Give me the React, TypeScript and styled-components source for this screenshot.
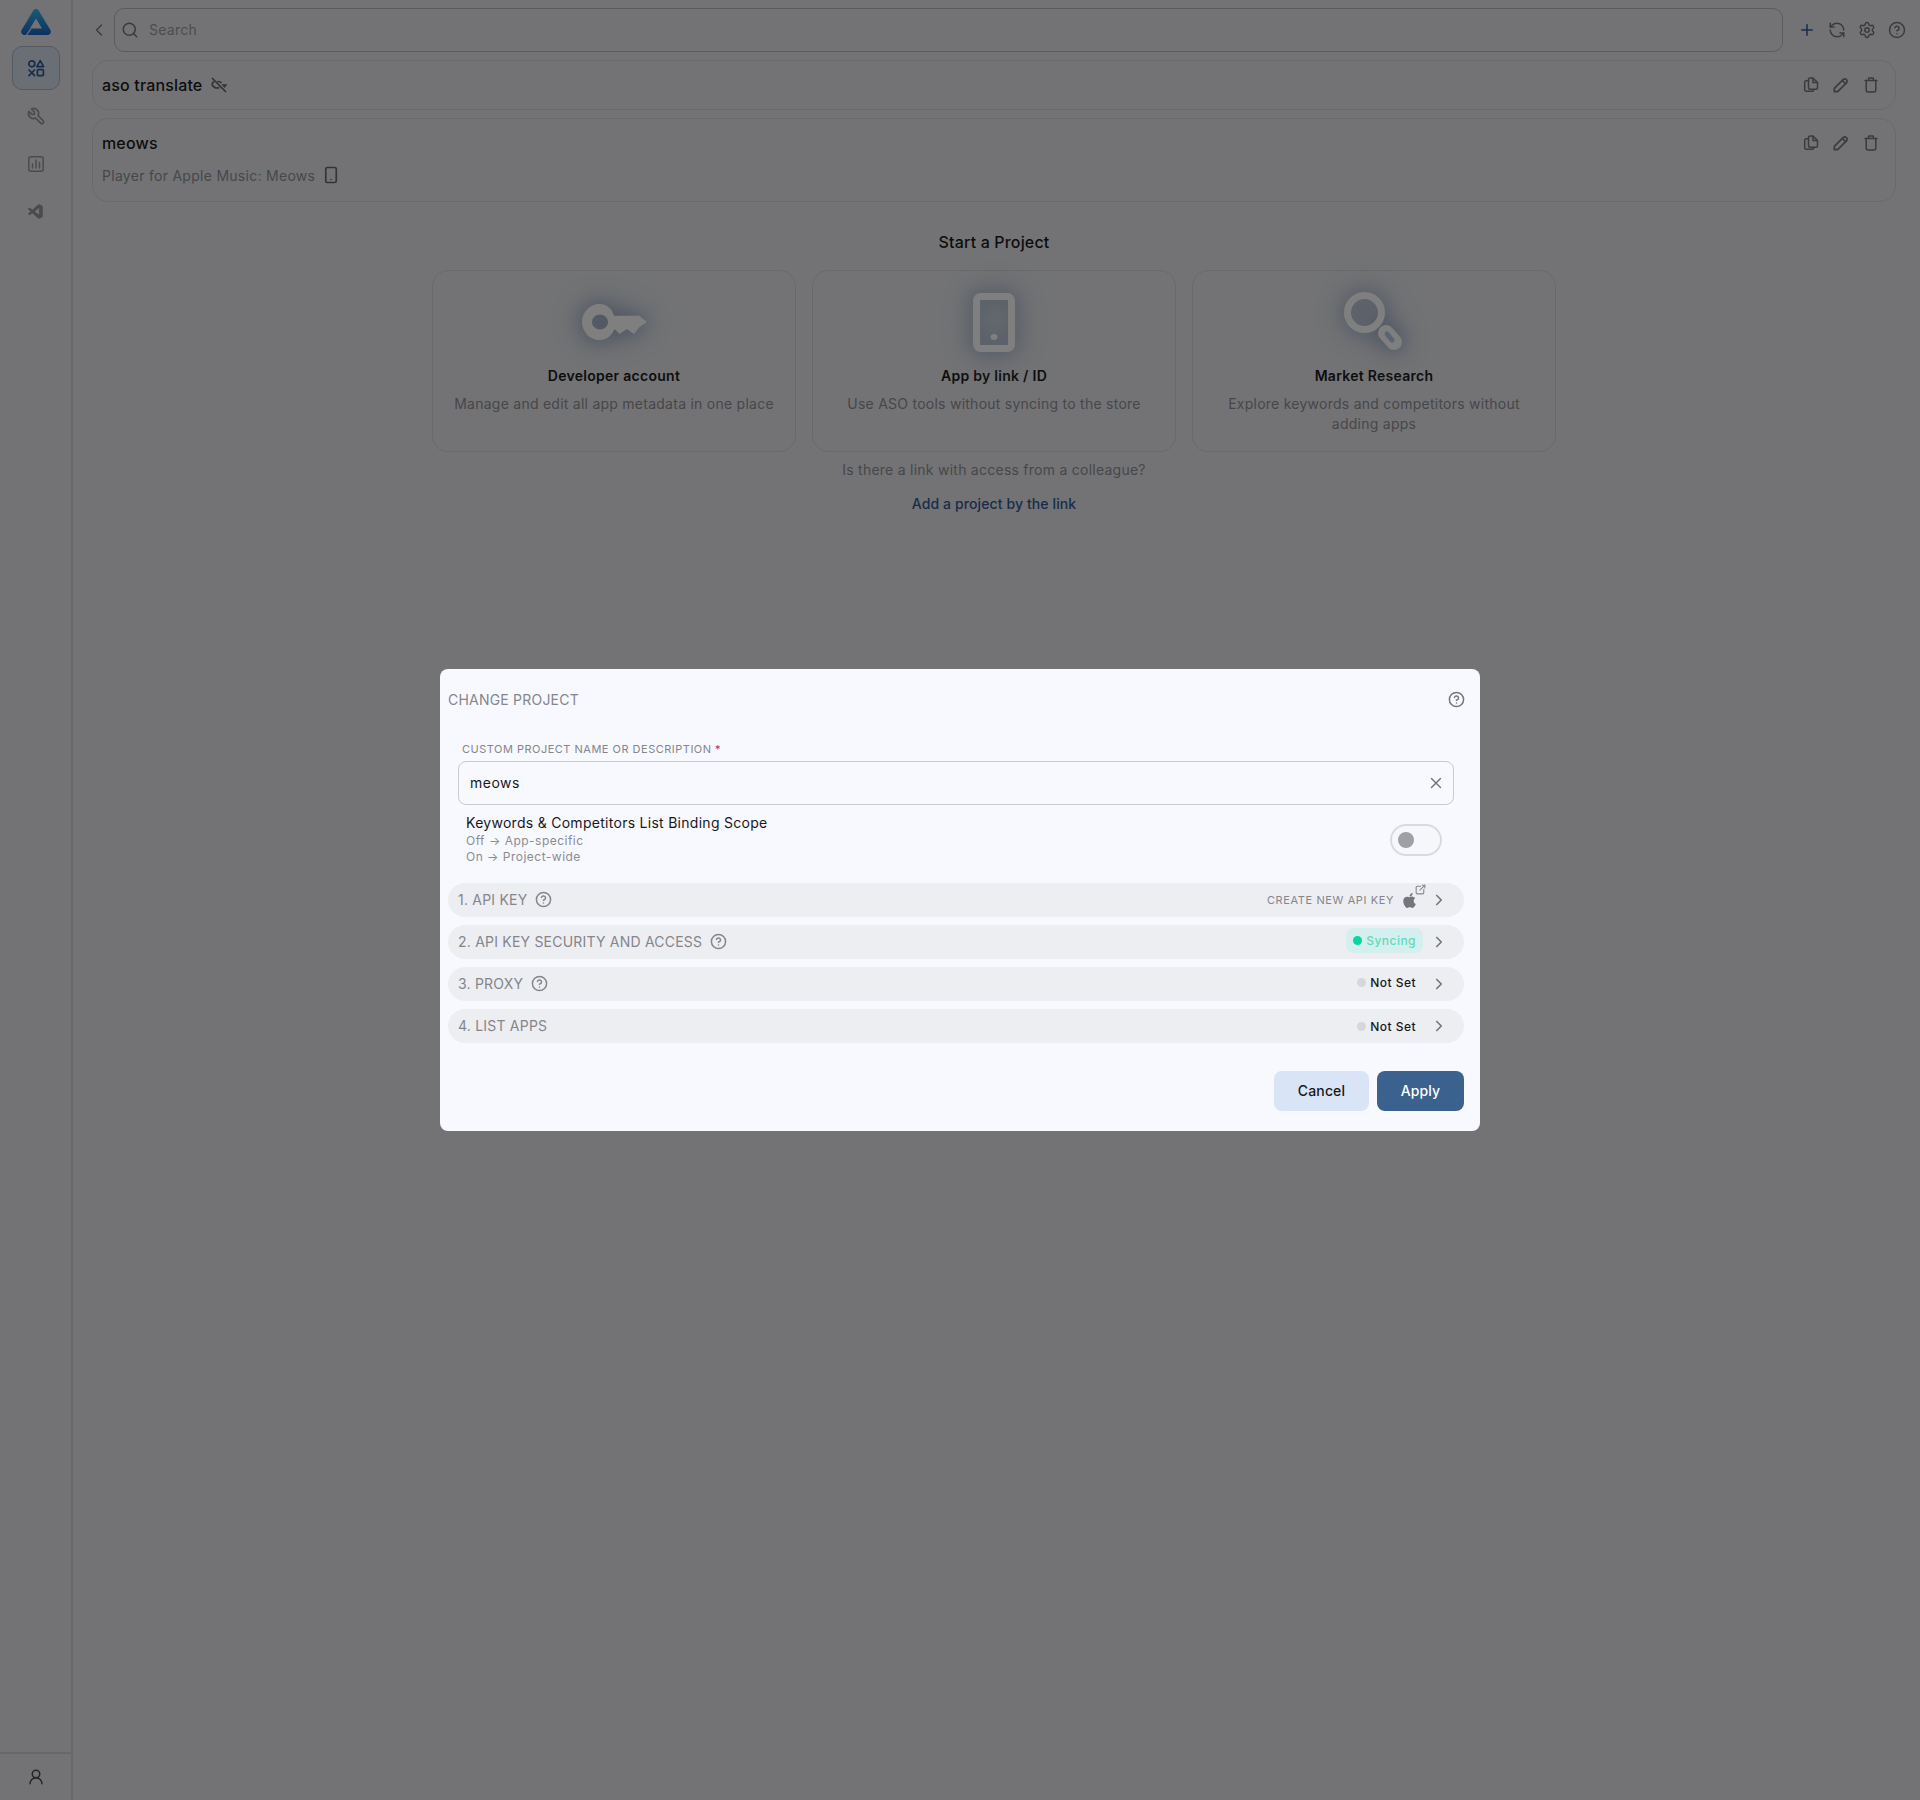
import React from 'react';
import styled, { createGlobalStyle } from 'styled-components';
import {
  ChevronLeft,
  ChevronRight,
  CircleHelp,
  Plus,
  RefreshCcw,
  Search,
  Settings,
  Smartphone,
  UserRound,
  X,
} from 'lucide-react';
import { FaApple } from 'react-icons/fa';
import { VscVscode } from 'react-icons/vsc';
import { TbExternalLink, TbPencil, TbTool } from 'react-icons/tb';

const GlobalStyle = createGlobalStyle`
  html, body {
    margin: 0;
    padding: 0;
    background: #e6e7ea;
    font-family: Inter, "Liberation Sans", sans-serif;
    color: #18181b;
  }
  * {
    box-sizing: border-box;
  }
`;

const Page = styled.div`
  display: flex;
  height: 1800px;
  overflow: hidden;
`;

const Sidebar = styled.aside`
  width: 73px;
  flex: none;
  padding-left: 1px;
  display: flex;
  flex-direction: column;
  align-items: center;
  border-right: 2px solid #cfd0d4;
`;

const LogoBox = styled.div`
  height: 46px;
  display: flex;
  align-items: center;
  justify-content: center;
  padding-bottom: 2px;
`;

const NavList = styled.nav`
  display: flex;
  flex-direction: column;
`;

const NavItem = styled.div<{ $active?: boolean }>`
  width: 48px;
  height: 44px;
  margin-bottom: 4px;
  display: flex;
  align-items: center;
  justify-content: center;
  border-radius: 10px;
  color: ${(p) => (p.$active ? '#2f5a93' : '#96969d')};
  background: ${(p) => (p.$active ? '#d4ddea' : 'transparent')};
  border: 1px solid ${(p) => (p.$active ? '#a9b4c4' : 'transparent')};
`;

const SidebarFoot = styled.div`
  margin-top: auto;
  margin-left: -1px;
  width: 72px;
  height: 48px;
  border-top: 2px solid #cfd0d4;
  display: flex;
  align-items: center;
  justify-content: center;
  color: #4a4a50;
`;

const Main = styled.main`
  flex: 1;
  min-width: 0;
  padding: 8px 14px 0 19px;
  display: flex;
  flex-direction: column;
`;

const TopBar = styled.div`
  display: flex;
  align-items: center;
  height: 44px;
`;

const BackButton = styled.div`
  width: 25px;
  margin-left: -3px;
  flex: none;
  display: flex;
  color: #7b7b82;
`;

const SearchBox = styled.div`
  flex: 1;
  height: 44px;
  display: flex;
  align-items: center;
  gap: 10px;
  padding: 0 6px 1px;
  border: 1px solid #b6b7bc;
  border-radius: 10px;
  font-size: 14px;
  letter-spacing: 0.02em;
  color: #9a9aa1;
`;

const SearchGlyph = styled.span`
  display: flex;
  color: #76767d;
`;

const TopActions = styled.div`
  width: 123px;
  flex: none;
  display: flex;
  justify-content: flex-end;
  gap: 12px;
  color: #76767d;
`;

const AccentIcon = styled.span`
  display: flex;
  color: #2f5a93;
`;

const ProjectCard = styled.div<{ $tall?: boolean }>`
  margin-top: 8px;
  margin-right: 10px;
  height: ${(p) => (p.$tall ? '84px' : '50px')};
  border: 1px solid #d2d3d7;
  border-radius: 16px;
  padding: ${(p) => (p.$tall ? '13px 9px 0' : '0 9px')};
  display: flex;
  align-items: ${(p) => (p.$tall ? 'flex-start' : 'center')};
  justify-content: space-between;
`;

const ProjectInfo = styled.div`
  display: flex;
  flex-direction: column;
  gap: 12px;
`;

const ProjectName = styled.div`
  display: flex;
  align-items: center;
  gap: 9px;
  height: 22px;
  font-size: 16px;
  font-weight: 500;
  letter-spacing: 0.01em;
  color: #1a1a1d;
`;

const ProjectSub = styled.div`
  display: flex;
  align-items: center;
  gap: 7px;
  font-size: 14px;
  letter-spacing: 0.02em;
  color: #8e8e95;
`;

const MutedIcon = styled.span`
  display: flex;
  color: #66666d;
`;

const CardActions = styled.div<{ $drop?: boolean }>`
  display: flex;
  gap: 14px;
  margin: ${(p) => (p.$drop ? '3px' : '0')} 7px 0 0;
  color: #76767d;
`;

const PencilSlot = styled.span`
  display: flex;
  margin: -2px;
`;

const StartSection = styled.section`
  display: flex;
  flex-direction: column;
  align-items: center;
  margin-top: 28px;
  margin-right: 10px;
`;

const StartTitle = styled.h2`
  margin: 0;
  height: 24px;
  line-height: 24px;
  font-size: 16px;
  font-weight: 500;
  letter-spacing: 0.01em;
  color: #1a1a1d;
`;

const StartCards = styled.div`
  display: grid;
  grid-template-columns: repeat(3, 364px);
  gap: 16px;
  margin-top: 16px;
`;

const StartCard = styled.div`
  height: 182px;
  border: 1px solid #d2d3d7;
  border-radius: 16px;
  padding: 0 16px;
  display: flex;
  flex-direction: column;
  align-items: center;
  text-align: center;
`;

const Glow = styled.div`
  height: 90px;
  margin-top: 6px;
  display: flex;
  align-items: center;
  justify-content: center;
  color: #ffffff;
  & > svg {
    filter: drop-shadow(0 0 10px #8a9cba) drop-shadow(0 0 16px #b5c2d6);
  }
`;

const StartCardTitle = styled.div`
  margin-top: -1px;
  font-size: 14px;
  line-height: 20px;
  font-weight: 600;
  letter-spacing: 0.02em;
  color: #1a1a1d;
`;

const StartCardText = styled.div`
  margin-top: 8px;
  font-size: 14px;
  line-height: 20px;
  letter-spacing: 0.018em;
  color: #8e8e95;
`;

const LinkNote = styled.div`
  margin-top: 8px;
  height: 20px;
  line-height: 20px;
  font-size: 14px;
  letter-spacing: 0.018em;
  color: #8e8e95;
`;

const LinkAction = styled.div`
  margin-top: 14px;
  height: 20px;
  line-height: 20px;
  font-size: 14px;
  font-weight: 500;
  letter-spacing: 0.008em;
  color: #2f5a93;
`;

const Overlay = styled.div`
  position: fixed;
  inset: 0;
  background: rgba(0, 0, 0, 0.5);
  display: flex;
  align-items: center;
  justify-content: center;
`;

const Modal = styled.div`
  width: 1040px;
  height: 462px;
  background: #f8f9ff;
  border-radius: 8px;
  padding: 0 16px 0 8px;
  display: flex;
  flex-direction: column;
`;

const ModalHead = styled.div`
  height: 61px;
  display: flex;
  align-items: center;
  justify-content: space-between;
  font-size: 14px;
  letter-spacing: 0.015em;
  color: #85858c;
`;

const HelpIcon = styled.span`
  display: flex;
  margin-right: -1px;
  color: #75757c;
`;

const FieldLabel = styled.label`
  margin: 12px 0 0 14px;
  height: 14px;
  line-height: 14px;
  font-size: 11px;
  letter-spacing: 0.045em;
  color: #85858c;
`;

const Required = styled.span`
  color: #c8283c;
`;

const InputBox = styled.div`
  margin: 5px 10px 0;
  height: 44px;
  border: 1px solid #c9cad0;
  border-radius: 8px;
  padding: 0 8px 1px 11px;
  display: flex;
  align-items: center;
  justify-content: space-between;
  font-size: 14px;
  letter-spacing: 0.035em;
  color: #18181b;
`;

const ClearIcon = styled.span`
  display: flex;
  color: #75757c;
`;

const ScopeRow = styled.div`
  margin: 9px 22px 0 18px;
  display: flex;
  align-items: center;
  justify-content: space-between;
`;

const ScopeText = styled.div`
  display: flex;
  flex-direction: column;
`;

const ScopeTitle = styled.div`
  margin: -1px 0 1px;
  font-size: 14px;
  line-height: 19px;
  letter-spacing: 0.02em;
  color: #18181b;
`;

const ScopeHint = styled.div`
  font-size: 12px;
  line-height: 16px;
  letter-spacing: 0.04em;
  color: #8b8b92;
`;

const Toggle = styled.div`
  width: 52px;
  height: 32px;
  border: 2px solid #d9dade;
  border-radius: 16px;
  background: #f6f7fb;
  padding: 0 6px;
  display: flex;
  align-items: center;
`;

const ToggleKnob = styled.span`
  width: 16px;
  height: 16px;
  border-radius: 50%;
  background: #9f9fa6;
`;

const Sections = styled.div`
  margin-top: 18px;
  display: flex;
  flex-direction: column;
  gap: 8px;
`;

const SectionRow = styled.div`
  height: 34px;
  border-radius: 17px;
  background: #edeef2;
  padding: 0 16px 0 10px;
  display: flex;
  align-items: center;
  justify-content: space-between;
`;

const SectionTitle = styled.div`
  display: flex;
  align-items: center;
  gap: 8px;
  padding-bottom: 1px;
  font-size: 14px;
  letter-spacing: 0.015em;
  color: #85858c;
`;

const SectionRight = styled.div`
  display: flex;
  align-items: center;
  gap: 7px;
`;

const ChevronIcon = styled.span`
  display: flex;
  color: #75757c;
`;

const CreateKey = styled.div`
  display: flex;
  align-items: center;
  gap: 7px;
  margin-right: 5px;
  font-size: 11px;
  letter-spacing: 0.055em;
  color: #85858c;
`;

const AppleMark = styled.span`
  position: relative;
  display: flex;
  width: 17px;
  color: #75757c;
`;

const ExternalMark = styled.span`
  position: absolute;
  top: -9px;
  left: 13px;
  display: flex;
  color: #85858c;
`;

const StatusBadge = styled.div<{ $syncing?: boolean; $lift?: number }>`
  display: flex;
  align-items: center;
  gap: 4px;
  height: 25px;
  padding: 0 7px;
  margin-top: ${(p) => -(p.$lift ?? 0)}px;
  border-radius: 8px;
  font-size: 12px;
  font-weight: 500;
  letter-spacing: 0.04em;
  background: ${(p) => (p.$syncing ? '#d5eeee' : 'transparent')};
  color: ${(p) => (p.$syncing ? '#5edcbb' : '#18181b')};
`;

const StatusDot = styled.span<{ $syncing?: boolean }>`
  width: 9px;
  height: 9px;
  border-radius: 50%;
  background: ${(p) => (p.$syncing ? '#06d6a0' : '#d6d7dc')};
`;

const ModalFoot = styled.div`
  margin-top: 28px;
  display: flex;
  justify-content: flex-end;
  gap: 8px;
`;

const FootButton = styled.button<{ $primary?: boolean }>`
  height: 40px;
  width: ${(p) => (p.$primary ? '87px' : '95px')};
  border: none;
  border-radius: 8px;
  padding: 0 0 1px;
  font-family: inherit;
  font-size: 14px;
  font-weight: 500;
  letter-spacing: 0.01em;
  background: ${(p) => (p.$primary ? '#3b618f' : '#d9e4f6')};
  color: ${(p) => (p.$primary ? '#ffffff' : '#18181b')};
`;

const Logo = () => (
  <svg width="30" height="26" viewBox="0 0 30 26">
    <defs>
      <linearGradient id="logoFill" x1="0" y1="0" x2="0" y2="1">
        <stop offset="0" stopColor="#35b4ea" />
        <stop offset="1" stopColor="#1a62c4" />
      </linearGradient>
    </defs>
    <path
      d="M12.500 1.200C13.600-.4 16.400-.4 17.500 1.200L29.400 21c1.200 2.200-.2 5-2.800 5H3.400C.8 26-.6 23.200.6 21Z"
      fill="url(#logoFill)"
    />
    <path d="M15 9.500L9 19.500H21Z" fill="#e6e7ea" />
    <path d="M10 19.500L5.500 26" stroke="#e6e7ea" strokeWidth="1.3" />
  </svg>
);

const ShapesIcon = () => (
  <svg width="18" height="18" viewBox="0 0 18 18" fill="none" stroke="currentColor" strokeWidth="1.7">
    <circle cx="4.800" cy="4.800" r="3" />
    <path d="M13.200 1.600L16.600 7.600H9.800Z" strokeLinejoin="round" />
    <path d="M2 11l5.600 5.600M7.600 11L2 16.600" strokeLinecap="round" />
    <rect x="10.400" y="10.600" width="6" height="6" rx="0.8" />
  </svg>
);

const ChartIcon = () => (
  <svg width="18" height="18" viewBox="0 0 18 18" fill="none" stroke="currentColor" strokeWidth="1.5">
    <rect x="1.800" y="1.800" width="14.400" height="14.400" rx="2" />
    <path d="M5.500 13V9M9 13V5M12.500 13V7.500" strokeLinecap="round" />
  </svg>
);

const HiddenEye = () => (
  <svg width="17" height="16" viewBox="0 0 17 16" fill="none" stroke="currentColor" strokeWidth="1.7">
    <path d="M1.500 1.500L14.500 14.500" strokeLinecap="round" />
    <path d="M3 4.500C1.800 5.500 1 7 1.200 8c1 1.600 3 3 5 3 .8 0 1.600-.2 2.200-.5M6.500 4.600c1.500-.3 3 .2 4 1.200" />
    <path d="M10.500 7.200H16.500L13.500 11Z" fill="currentColor" stroke="none" />
  </svg>
);

const CopyIcon = () => (
  <svg width="16" height="16" viewBox="0 0 16 16" fill="none" stroke="currentColor" strokeWidth="1.500" strokeLinejoin="round">
    <path d="M5.500 2.500C5.500 1.600 6.200 1 7 1h3l4.500 4.500v5.300c0 .9-.7 1.500-1.500 1.500H7c-.9 0-1.500-.6-1.500-1.500Z" />
    <path d="M10 1v4.500h4.500" />
    <path d="M5.500 3.800H3.200c-.9 0-1.500.6-1.500 1.500v7.400c0 .9.7 1.600 1.600 1.600h6c.8 0 1.500-.7 1.500-1.600v-.4" />
  </svg>
);

const TrashIcon = () => (
  <svg width="16" height="16" viewBox="0 0 16 16" fill="none" stroke="currentColor" strokeWidth="1.500" strokeLinecap="round" strokeLinejoin="round">
    <path d="M2 3.400H14M5.600 3.200V1.600C5.600 1.200 5.900 1 6.200 1h3.600c.3 0 .6.2.6.6v1.600" />
    <path d="M3.200 3.400V13c0 1.100.8 2 1.900 2h5.800c1.100 0 1.900-.9 1.900-2V3.400" />
  </svg>
);

const KeyArt = () => (
  <svg width="65" height="36" viewBox="0 0 65 36" fill="currentColor">
    <path
      fillRule="evenodd"
      d="M17.500 0C24.500 0 30 4.500 32 11.700H57L65 18L57.500 23L52 30L45 25L37.500 30L32.500 25C30 31.500 24.500 36 17.500 36C8 36 0 28 0 18S8 0 17.500 0ZM18 10.500C13.600 10.500 10 13.800 10 18S13.600 25.500 18 25.500S26 22.200 26 18S22.400 10.500 18 10.500Z"
    />
  </svg>
);

const PhoneArt = () => (
  <svg width="42" height="59" viewBox="0 0 42 59" fill="currentColor">
    <path
      fillRule="evenodd"
      d="M8 0H34C38.500 0 42 3.500 42 8V51C42 55.500 38.500 59 34 59H8C3.500 59 0 55.500 0 51V8C0 3.500 3.500 0 8 0ZM7 7V52H35V7ZM21 41c1.900 0 3.500 1.300 3.500 3S22.900 47 21 47s-3.500-1.300-3.500-3 1.600-3 3.500-3Z"
    />
  </svg>
);

const LensArt = () => (
  <svg width="60" height="60" viewBox="0 0 60 60" fill="none" stroke="currentColor">
    <circle cx="20.500" cy="20.500" r="17" strokeWidth="7" />
    <path d="M42 41L50 50" strokeWidth="16" strokeLinecap="round" />
    <path d="M43 42L48 48" strokeWidth="5" strokeLinecap="round" stroke="#b4c8ea" />
  </svg>
);

const startOptions = [
  { title: 'Developer account', text: 'Manage and edit all app metadata in one place', art: <KeyArt /> },
  { title: 'App by link / ID', text: 'Use ASO tools without syncing to the store', art: <PhoneArt /> },
  { title: 'Market Research', text: 'Explore keywords and competitors without adding apps', art: <LensArt /> },
];

const CardButtons = ({ drop }: { drop?: boolean }) => (
  <CardActions $drop={drop}>
    <CopyIcon />
    <PencilSlot>
      <TbPencil size={20} />
    </PencilSlot>
    <TrashIcon />
  </CardActions>
);

const RowChevron = () => (
  <ChevronIcon>
    <ChevronRight size={18} strokeWidth={2.2} />
  </ChevronIcon>
);

const App = () => {
  return (
    <>
      <GlobalStyle />
      <Page>
        <Sidebar>
          <LogoBox>
            <Logo />
          </LogoBox>
          <NavList>
            <NavItem $active>
              <ShapesIcon />
            </NavItem>
            <NavItem>
              <TbTool size={20} />
            </NavItem>
            <NavItem>
              <ChartIcon />
            </NavItem>
            <NavItem>
              <VscVscode size={18} />
            </NavItem>
          </NavList>
          <SidebarFoot>
            <UserRound size={18} />
          </SidebarFoot>
        </Sidebar>
        <Main>
          <TopBar>
            <BackButton>
              <ChevronLeft size={20} strokeWidth={1.8} />
            </BackButton>
            <SearchBox>
              <SearchGlyph>
                <Search size={18} />
              </SearchGlyph>
              Search
            </SearchBox>
            <TopActions>
              <AccentIcon>
                <Plus size={18} />
              </AccentIcon>
              <RefreshCcw size={18} />
              <Settings size={18} />
              <CircleHelp size={18} />
            </TopActions>
          </TopBar>
          <ProjectCard>
            <ProjectName>
              aso translate
              <MutedIcon>
                <HiddenEye />
              </MutedIcon>
            </ProjectName>
            <CardButtons />
          </ProjectCard>
          <ProjectCard $tall>
            <ProjectInfo>
              <ProjectName>meows</ProjectName>
              <ProjectSub>
                Player for Apple Music: Meows
                <MutedIcon>
                  <Smartphone size={18} strokeWidth={2.2} />
                </MutedIcon>
              </ProjectSub>
            </ProjectInfo>
            <CardButtons drop />
          </ProjectCard>
          <StartSection>
            <StartTitle>Start a Project</StartTitle>
            <StartCards>
              {startOptions.map((option) => (
                <StartCard key={option.title}>
                  <Glow>{option.art}</Glow>
                  <StartCardTitle>{option.title}</StartCardTitle>
                  <StartCardText>{option.text}</StartCardText>
                </StartCard>
              ))}
            </StartCards>
            <LinkNote>Is there a link with access from a colleague?</LinkNote>
            <LinkAction>Add a project by the link</LinkAction>
          </StartSection>
        </Main>
      </Page>
      <Overlay>
        <Modal>
          <ModalHead>
            CHANGE PROJECT
            <HelpIcon>
              <CircleHelp size={17} strokeWidth={2.1} />
            </HelpIcon>
          </ModalHead>
          <FieldLabel>
            CUSTOM PROJECT NAME OR DESCRIPTION <Required>*</Required>
          </FieldLabel>
          <InputBox>
            meows
            <ClearIcon>
              <X size={18} strokeWidth={1.9} />
            </ClearIcon>
          </InputBox>
          <ScopeRow>
            <ScopeText>
              <ScopeTitle>Keywords &amp; Competitors List Binding Scope</ScopeTitle>
              <ScopeHint>Off → App-specific</ScopeHint>
              <ScopeHint>On → Project-wide</ScopeHint>
            </ScopeText>
            <Toggle>
              <ToggleKnob />
            </Toggle>
          </ScopeRow>
          <Sections>
            <SectionRow>
              <SectionTitle>
                1. API KEY
                <CircleHelp size={17} strokeWidth={2.1} />
              </SectionTitle>
              <SectionRight>
                <CreateKey>
                  CREATE NEW API KEY
                  <AppleMark>
                    <FaApple size={17} />
                    <ExternalMark>
                      <TbExternalLink size={13} />
                    </ExternalMark>
                  </AppleMark>
                </CreateKey>
                <RowChevron />
              </SectionRight>
            </SectionRow>
            <SectionRow>
              <SectionTitle>
                2. API KEY SECURITY AND ACCESS
                <CircleHelp size={17} strokeWidth={2.1} />
              </SectionTitle>
              <SectionRight>
                <StatusBadge $syncing $lift={3}>
                  <StatusDot $syncing />
                  Syncing
                </StatusBadge>
                <RowChevron />
              </SectionRight>
            </SectionRow>
            <SectionRow>
              <SectionTitle>
                3. PROXY
                <CircleHelp size={17} strokeWidth={2.1} />
              </SectionTitle>
              <SectionRight>
                <StatusBadge $lift={3}>
                  <StatusDot />
                  Not Set
                </StatusBadge>
                <RowChevron />
              </SectionRight>
            </SectionRow>
            <SectionRow>
              <SectionTitle>4. LIST APPS</SectionTitle>
              <SectionRight>
                <StatusBadge>
                  <StatusDot />
                  Not Set
                </StatusBadge>
                <RowChevron />
              </SectionRight>
            </SectionRow>
          </Sections>
          <ModalFoot>
            <FootButton>Cancel</FootButton>
            <FootButton $primary>Apply</FootButton>
          </ModalFoot>
        </Modal>
      </Overlay>
    </>
  );
};

export default App;
